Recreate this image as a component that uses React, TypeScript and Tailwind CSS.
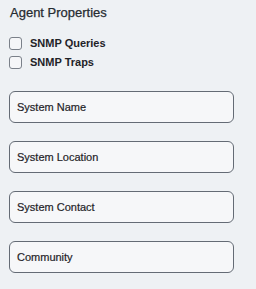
import React from "react";

const fields = ["System Name", "System Location", "System Contact", "Community"];

export default function App() {
  return (
    <div className="w-[256px] h-[289px] bg-[#eef1f4] pl-[9px] pt-[5px] font-['Liberation_Sans',Arial,sans-serif] text-[#1f2328]">
      <div className="text-[13px] leading-[16px] pl-px text-[#262b31] [-webkit-text-stroke:0.25px_#262b31]">Agent Properties</div>
      <div className="mt-[16px] flex flex-col gap-[6px]">
        {["SNMP Queries", "SNMP Traps"].map((l) => (
          <label key={l} className="flex items-center gap-[8px] h-[13px]">
            <span className="w-[13px] h-[13px] rounded-[3px] border border-[#7a8089] bg-[#f5f6f8]" />
            <span className="text-[11px] font-bold leading-[13px]">{l}</span>
          </label>
        ))}
      </div>
      <div className="mt-[22px] flex flex-col gap-[18px]">
        {fields.map((f) => (
          <div
            key={f}
            className="w-[225px] h-[32px] rounded-[6px] border border-[#646b75] bg-[#f6f7f9] flex items-center pl-[7px] text-[11px] [-webkit-text-stroke:0.2px_#1f2328]"
          >
            {f}
          </div>
        ))}
      </div>
    </div>
  );
}
